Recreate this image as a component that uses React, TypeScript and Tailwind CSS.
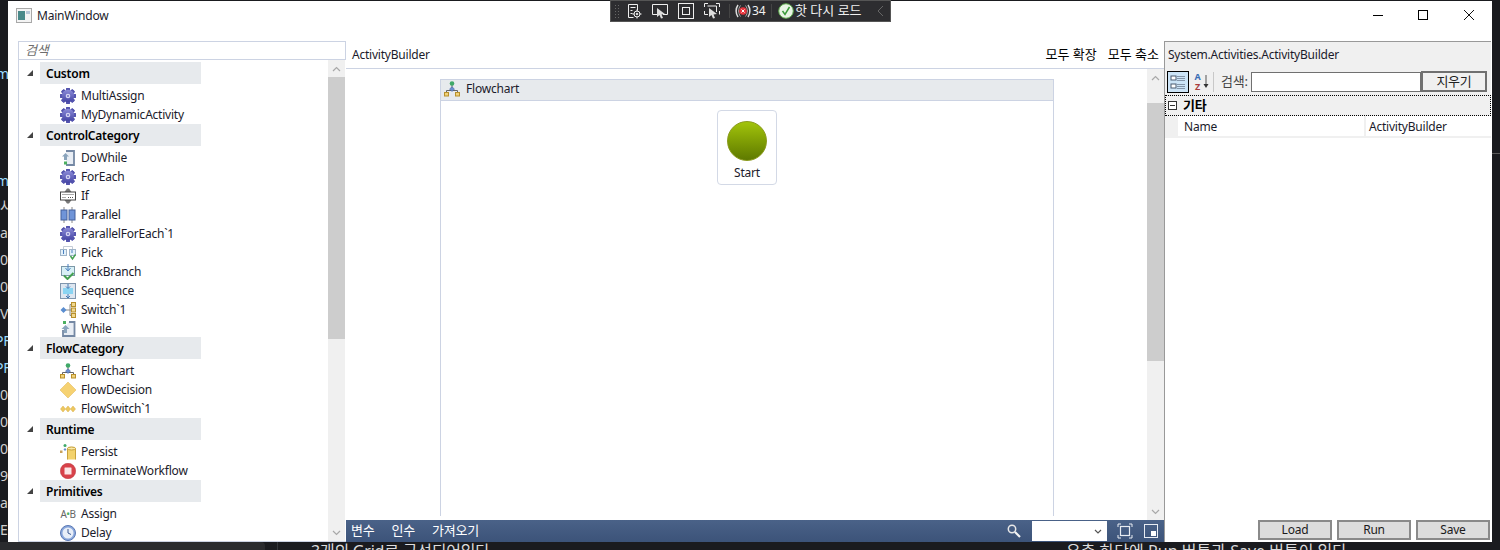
import type { ReactNode } from "react";

// WPF workflow designer host window, with the VS debug toolbar on top of it.
const font = "font-['Noto_Sans','Noto_Sans_CJK_KR',sans-serif] tracking-[-0.22px]";

function Gear() {
  const teeth = [0, 45, 90, 135, 180, 225, 270, 315];
  return (
    <svg width="16" height="16" viewBox="0 0 16 16">
      <defs>
        <linearGradient id="gearFill" x1="0" y1="0" x2="0" y2="1">
          <stop offset="0" stopColor="#8c8cd8" />
          <stop offset="1" stopColor="#4444a4" />
        </linearGradient>
      </defs>
      {teeth.map((a) => (
        <rect key={a} x="6" y="0" width="4" height="16" rx="1" fill="#5454ae" transform={`rotate(${a} 8 8)`} />
      ))}
      <circle cx="8" cy="8" r="6.200" fill="url(#gearFill)" />
      <circle cx="8" cy="8" r="2.300" fill="#d4d4f2" />
      <circle cx="8" cy="8" r="1" fill="#6e6ec0" />
    </svg>
  );
}

function DoWhileIcon() {
  return (
    <svg width="16" height="16" viewBox="0 0 16 16">
      <path d="M6 1h8v14H6" fill="#e8edf4" stroke="#7488a4" strokeWidth="1.800" />
      <path d="M5.500 3l3.500 3.500H7V10H4V6.500H2z" fill="#8aa4bc" />
      <rect x="4" y="11.500" width="3" height="3" fill="#4cb060" />
    </svg>
  );
}

function WhileIcon() {
  return (
    <svg width="16" height="16" viewBox="0 0 16 16">
      <path d="M9 1h5.500v14H3V9" fill="#e8edf4" stroke="#7488a4" strokeWidth="1.800" />
      <path d="M5.500 4L9.500 8H7v4H4V8H1.500z" fill="#8aa4bc" />
      <rect x="3" y="0" width="3" height="3" fill="#4cb060" />
    </svg>
  );
}

function IfIcon() {
  return (
    <svg width="16" height="16" viewBox="0 0 16 16">
      <path d="M4.500 4L7 0.500h2L11.500 4zM4.500 12L7 15.500h2l2.500-3.500z" fill="#777" />
      <rect x="0.500" y="4" width="15" height="8" fill="#fff" stroke="#444" />
      <path d="M2.500 6.500h3M6.500 6.500h3M10.500 6.500h3M2.500 9.500h4M8 9.500h5.500" stroke="#555" strokeDasharray="1 1" />
    </svg>
  );
}

function ParallelIcon() {
  return (
    <svg width="16" height="16" viewBox="0 0 16 16">
      <path d="M4 0v16M12 0v16" stroke="#888" />
      <rect x="1" y="3" width="6" height="10" fill="#6f94d8" stroke="#44609c" />
      <rect x="9" y="3" width="6" height="10" fill="#6f94d8" stroke="#44609c" />
    </svg>
  );
}

function PickIcon() {
  return (
    <svg width="16" height="16" viewBox="0 0 16 16">
      <path d="M3.500 4V1.500h9V4" fill="none" stroke="#c4ccd6" />
      <rect x="0.500" y="4.500" width="6" height="6" fill="#e2f0fa" stroke="#9fb4c8" />
      <rect x="9.500" y="4.500" width="6" height="6" fill="#e2f0fa" stroke="#9fb4c8" />
      <path d="M3.500 5v4M12 5v3" stroke="#4a80c0" />
      <path d="M10.500 11l2 3 3-4.500" fill="none" stroke="#44a050" strokeWidth="1.500" />
    </svg>
  );
}

function PickBranchIcon() {
  return (
    <svg width="16" height="16" viewBox="0 0 16 16">
      <rect x="1.500" y="2.500" width="13" height="9" fill="#d8f0f6" stroke="#7c98a8" />
      <path d="M8 0v6M5.500 4L8 7l2.500-3" fill="none" stroke="#4a80c0" />
      <path d="M4 11.500l3.500 3.500 6-6" fill="none" stroke="#44a050" strokeWidth="2" />
    </svg>
  );
}

function SequenceIcon() {
  return (
    <svg width="16" height="16" viewBox="0 0 16 16">
      <rect x="0.500" y="0.500" width="15" height="15" fill="#dde6f0" stroke="#8096ae" />
      <rect x="3" y="5" width="10" height="6" fill="#8ad4f2" />
      <path d="M8 1v4M6 3.500L8 5.500l2-2M8 11v4M6 13l2 2 2-2" fill="none" stroke="#3f78b4" />
    </svg>
  );
}

function SwitchIcon() {
  return (
    <svg width="16" height="16" viewBox="0 0 16 16">
      <path d="M5 8h5M10 2.500v11M10 2.500h2M10 8h2M10 13.500h2" stroke="#8a8a8a" fill="none" />
      <path d="M3.500 5L6.500 8l-3 3L0.500 8z" fill="#5b8ed0" />
      <rect x="11.500" y="0.500" width="4" height="4" fill="#f0d890" stroke="#b8902c" />
      <rect x="11.500" y="6" width="4" height="4" fill="#f0d890" stroke="#b8902c" />
      <rect x="11.500" y="11.500" width="4" height="4" fill="#f0d890" stroke="#b8902c" />
    </svg>
  );
}

function FlowchartIcon() {
  return (
    <svg width="16" height="16" viewBox="0 0 16 16">
      <path d="M8 3v5M2.500 12V9.500h11V12" stroke="#666" fill="none" />
      <circle cx="8" cy="2.500" r="2.300" fill="#3fa968" />
      <path d="M8 5.800L10.500 8 8 10.500 5.500 8z" fill="#6a8fd0" stroke="#3e5d9c" strokeWidth="0.500" />
      <rect x="0.500" y="11.500" width="4" height="3.500" fill="#f0d27a" stroke="#b8902c" />
      <rect x="11.500" y="11.500" width="4" height="3.500" fill="#f0d27a" stroke="#b8902c" />
    </svg>
  );
}

function DecisionIcon() {
  return (
    <svg width="16" height="16" viewBox="0 0 16 16">
      <path d="M8 0l8 8-8 8-8-8z" fill="#f6d272" stroke="#e0b450" strokeWidth="0.500" />
    </svg>
  );
}

function FlowSwitchIcon() {
  return (
    <svg width="16" height="16" viewBox="0 0 16 16">
      <path d="M3 5l2.500 3L3 11 0.500 8zM8 5l2.500 3L8 11 5.500 8zM13 5l2.500 3L13 11l-2.500-3z" fill="#edc860" stroke="#d8ae48" strokeWidth="0.500" />
    </svg>
  );
}

function PersistIcon() {
  return (
    <svg width="16" height="16" viewBox="0 0 16 16">
      <path d="M7.500 15.500V4.500c0-1.500 8-1.500 8 0v11" fill="#f3d26c" stroke="#c8a23c" />
      <ellipse cx="11.500" cy="4.500" rx="4" ry="1.500" fill="#fae9a8" stroke="#c8a23c" />
      <circle cx="5" cy="1.500" r="1.500" fill="#3fa968" />
      <path d="M5 4L6.500 5.500 5 7 3.500 5.500z" fill="#6a8fd0" />
      <rect x="0" y="6.500" width="2.500" height="2.500" fill="#c8a25c" />
    </svg>
  );
}

function TerminateIcon() {
  return (
    <svg width="16" height="16" viewBox="0 0 16 16">
      <circle cx="8" cy="8" r="7.700" fill="#d8424a" stroke="#b83238" strokeWidth="0.500" />
      <rect x="4.500" y="4.500" width="7" height="7" rx="0.500" fill="#fbe6e6" />
    </svg>
  );
}

function DelayIcon() {
  return (
    <svg width="16" height="16" viewBox="0 0 16 16">
      <circle cx="8" cy="8" r="7.500" fill="#8aa8dc" stroke="#5a78b4" />
      <circle cx="8" cy="8" r="5.500" fill="#e8eef8" />
      <path d="M8 4v4l3 1.500" fill="none" stroke="#3c5a94" />
    </svg>
  );
}

function AssignIcon() {
  return (
    <span className="flex w-4 items-center justify-center text-[10px] leading-none tracking-[-0.5px] text-[#666]">
      A<span className="text-[#4cb060]">•</span>B
    </span>
  );
}

function Header({ title, className = "" }: { title: string; className?: string }) {
  return (
    <div className={`flex h-[22px] items-center ${className}`}>
      <svg width="8" height="8" viewBox="0 0 8 8" className="ml-[7px] mr-[6px] shrink-0">
        <path d="M7 1v6H1z" fill="#444" />
      </svg>
      <div className="flex h-full w-[161px] items-center bg-[#e7eaed] pl-[6px] pt-px text-[12px] font-semibold text-black">
        {title}
      </div>
    </div>
  );
}

function Item({ icon, label, className = "" }: { icon: ReactNode; label: string; className?: string }) {
  return (
    <div className={`flex h-[19px] items-center pl-[41px] text-[12px] text-[#1b1b2b] ${className}`}>
      <span className="mr-[5px] flex h-4 w-4 shrink-0 items-center justify-center">{icon}</span>
      {label}
    </div>
  );
}

function ScrollBar({ thumbTop, thumbHeight }: { thumbTop: string; thumbHeight: string }) {
  return (
    <div className="flex h-full w-[17px] shrink-0 flex-col bg-[#f0f0f0]">
      <div className="flex h-[17px] shrink-0 items-center justify-center">
        <svg width="9" height="6" viewBox="0 0 9 6"><path d="M1 5l3.500-3.500L8 5" fill="none" stroke="#a8a8a8" strokeWidth="1.200" /></svg>
      </div>
      <div className={`${thumbTop} ${thumbHeight} shrink-0 bg-[#cdcdcd]`} />
      <div className="flex-1" />
      <div className="flex h-[17px] shrink-0 items-center justify-center">
        <svg width="9" height="6" viewBox="0 0 9 6"><path d="M1 1l3.500 3.500L8 1" fill="none" stroke="#a8a8a8" strokeWidth="1.200" /></svg>
      </div>
    </div>
  );
}

function Toolbox() {
  return (
    <div className="flex w-[328px] shrink-0 flex-col border-l border-[#ccd3e3]">
      <div className="flex h-[19px] shrink-0 items-center border-y border-r border-[#ccd3e3] pl-[6px] text-[13px] italic text-[#6d6d6d]">
        검색
      </div>
      <div className="flex min-h-0 flex-1 border-b border-[#ccd3e3] pr-px">
        <div className="min-w-0 flex-1 overflow-hidden pt-[2px]">
          <Header title="Custom" />
          <div className="pt-[2px]">
            <Item icon={<Gear />} label="MultiAssign" />
            <Item icon={<Gear />} label="MyDynamicActivity" />
          </div>
          <Header title="ControlCategory" />
          <div className="pt-[2px]">
            <Item icon={<DoWhileIcon />} label="DoWhile" />
            <Item icon={<Gear />} label="ForEach" />
            <Item icon={<IfIcon />} label="If" />
            <Item icon={<ParallelIcon />} label="Parallel" />
            <Item icon={<Gear />} label="ParallelForEach`1" />
            <Item icon={<PickIcon />} label="Pick" />
            <Item icon={<PickBranchIcon />} label="PickBranch" />
            <Item icon={<SequenceIcon />} label="Sequence" />
            <Item icon={<SwitchIcon />} label="Switch`1" />
            <Item icon={<WhileIcon />} label="While" />
          </div>
          <Header title="FlowCategory" className="-mt-px" />
          <div className="pt-[2px]">
            <Item icon={<FlowchartIcon />} label="Flowchart" />
            <Item icon={<DecisionIcon />} label="FlowDecision" />
            <Item icon={<FlowSwitchIcon />} label="FlowSwitch`1" />
          </div>
          <Header title="Runtime" />
          <div className="pt-[2px]">
            <Item icon={<PersistIcon />} label="Persist" />
            <Item icon={<TerminateIcon />} label="TerminateWorkflow" />
          </div>
          <Header title="Primitives" />
          <div className="pt-[2px]">
            <Item icon={<AssignIcon />} label="Assign" />
            <Item icon={<DelayIcon />} label="Delay" />
          </div>
        </div>
        <ScrollBar thumbTop="mt-0" thumbHeight="h-[262px]" />
      </div>
    </div>
  );
}

function Designer() {
  return (
    <div className="flex w-[818px] shrink-0 flex-col">
      <div className="flex h-[28px] shrink-0 items-center justify-between border-b border-[#ccd3e3] pl-[6px] pr-[5px] text-[12px] text-[#1b1b2b]">
        <span>ActivityBuilder</span>
        <div className="flex gap-[11px] text-[13px] tracking-normal text-black">
          <span>모두 확장</span>
          <span>모두 축소</span>
        </div>
      </div>
      <div className="flex min-h-0 flex-1">
        <div className="min-w-0 flex-1 pl-[94px] pr-[93px] pt-[10px]">
          <div className="flex h-[437px] flex-col border-x border-t border-[#ccd3e3]">
            <div className="flex h-[21px] shrink-0 items-center gap-[6px] border-b border-[#ccd3e3] bg-[#e7eaed] pb-[2px] pl-[3px] text-[12px] text-[#1b1b2b]">
              <FlowchartIcon />
              Flowchart
            </div>
            <div className="flex justify-center pt-[9px]">
              <div className="flex h-[75px] w-[60px] flex-col items-center rounded-[4px] border border-[#d3d9e6] pt-[10px]">
                <div className="h-10 w-10 rounded-full border border-[#8a9a1c] bg-gradient-to-b from-[#a2c40c] to-[#5f7a00]" />
                <span className="mt-[3px] text-[12px] leading-[18px] text-[#1b1b2b]">Start</span>
              </div>
            </div>
          </div>
        </div>
        <ScrollBar thumbTop="mt-[17px]" thumbHeight="h-[258px]" />
      </div>
      <div className="flex h-[22px] shrink-0 items-center bg-gradient-to-b from-[#4a6288] to-[#3c5379] pl-[5px] text-[13px] text-white">
        <div className="flex gap-[17px]">
          <span>변수</span>
          <span>인수</span>
          <span>가져오기</span>
        </div>
        <div className="ml-auto flex items-center">
          <svg width="16" height="16" viewBox="0 0 16 16">
            <circle cx="6" cy="6" r="3.700" fill="none" stroke="#e8e8e8" strokeWidth="1.500" />
            <path d="M9 9l5 5" stroke="#f4f4f4" strokeWidth="2.200" />
          </svg>
          <div className="ml-[10px] flex h-5 w-[75px] items-center justify-end bg-white pr-[5px]">
            <svg width="8" height="5" viewBox="0 0 8 5"><path d="M1 1l3 3 3-3" fill="none" stroke="#555" strokeWidth="1.200" /></svg>
          </div>
          <svg width="16" height="16" viewBox="0 0 16 16" className="ml-[10px]">
            <rect x="3.500" y="3.500" width="9" height="9" fill="none" stroke="#e8ecf2" strokeWidth="1.200" />
            <path d="M1 4V1h3M12 1h3v3M15 12v3h-3M4 15H1v-3" fill="none" stroke="#e8ecf2" />
          </svg>
          <svg width="16" height="16" viewBox="0 0 16 16" className="ml-[10px] mr-[5px]">
            <rect x="1.500" y="1.500" width="13" height="13" fill="none" stroke="#e8ecf2" />
            <rect x="8" y="8" width="5" height="5" fill="#fff" />
          </svg>
        </div>
      </div>
    </div>
  );
}

function Properties() {
  return (
    <div className="flex w-[327px] shrink-0 flex-col border-l border-t border-[#999]">
      <div className="flex h-[26px] shrink-0 items-center bg-[#f0f0f0] pl-[3px] text-[12px] text-[#1b1b2b]">
        System.Activities.ActivityBuilder
      </div>
      <div className="flex h-[27px] shrink-0 items-center bg-[#f0f0f0] pl-[2px] text-[12px]">
        <div className="flex h-[22px] w-[22px] items-center justify-center border border-black bg-[#cce4f7]">
          <svg width="16" height="16" viewBox="0 0 16 16">
            <rect x="1" y="2" width="5" height="4" fill="#fff" stroke="#4a5a70" />
            <rect x="1" y="10" width="5" height="4" fill="#fff" stroke="#4a5a70" />
            <path d="M7 2.500h8M7 4.500h8M7 6.500h8M7 10.500h8M7 12.500h8M7 14.500h8" stroke="#8494a8" />
          </svg>
        </div>
        <span className="ml-[3px] flex h-5 w-[11px] flex-col items-center justify-center text-[9px] font-bold leading-[10px]">
          <span className="text-[#3b6db5]">A</span>
          <span className="text-[#a83c3c]">Z</span>
        </span>
        <svg width="6" height="16" viewBox="0 0 6 16">
          <path d="M3 1v10" stroke="#555" />
          <path d="M0.500 10h5L3 14z" fill="#333" />
        </svg>
        <div className="ml-[4px] h-[20px] w-px bg-[#c8c8c8]" />
        <span className="ml-[7px] w-[26px] shrink-0 whitespace-nowrap text-[13px] text-[#444]">검색:</span>
        <div className="ml-[4px] h-[20px] w-[170px] shrink-0 border border-[#707070] bg-white" />
        <div className="flex h-[21px] w-[66px] shrink-0 items-center justify-center border-2 border-[#707070] bg-[#f0f0f0] text-[13px] text-[#222]">
          지우기
        </div>
      </div>
      <div className="flex h-[21px] shrink-0 items-center border border-dotted border-black bg-[#f0f0f0] pl-[2px] text-[13px] font-semibold text-black">
        <span className="flex h-[9px] w-[9px] items-center justify-center border border-[#333] bg-white">
          <span className="h-px w-[5px] bg-[#333]" />
        </span>
        <span className="ml-[6px]">기타</span>
      </div>
      <div className="flex h-[22px] shrink-0 border-b-2 border-[#f0f0f0] text-[12px] text-[#1b1b2b]">
        <div className="w-[13px] shrink-0 bg-[#f0f0f0]" />
        <div className="flex w-[188px] shrink-0 items-center border-r-2 border-[#f0f0f0] pl-[6px] pt-px">Name</div>
        <div className="flex items-center pl-[3px] pt-px">ActivityBuilder</div>
      </div>
      <div className="flex flex-1 items-end justify-end gap-[5px] pb-[2px] pr-[1px]">
        <WinButton label="Load" />
        <WinButton label="Run" />
        <WinButton label="Save" />
      </div>
    </div>
  );
}

function WinButton({ label }: { label: string }) {
  return (
    <div className="flex h-5 w-[74px] items-center justify-center border-2 border-[#8a8a8a] bg-[#dddddd] text-[12px] text-[#1b1b1b]">
      {label}
    </div>
  );
}

function DebugBar() {
  return (
    <div className="absolute left-[610px] top-0 flex h-[22px] w-[281px] items-center border border-[#555] bg-[#2d2d30] pl-[3px] text-[13px] text-[#f0f0f0]">
      <div className="h-[14px] w-[5px] bg-[radial-gradient(#666_1px,transparent_1px)] bg-[length:3px_3px]" />
      <svg width="16" height="16" viewBox="0 0 16 16" className="ml-[7px]" fill="none" stroke="#eee">
        <path d="M2.500 1.500h9v6M2.500 1.500v13h5M4.500 4.500h5M4.500 7.500h2M4.500 10.500h2" />
        <circle cx="11" cy="11" r="3" />
        <circle cx="11" cy="11" r="0.800" fill="#eee" />
        <path d="M11 6.500v2M11 13.500v2M6.500 11h2M13.500 11h2" />
      </svg>
      <svg width="16" height="16" viewBox="0 0 16 16" className="ml-[10px]" fill="none">
        <path d="M5 11.500H0.500v-10h15v10H11" stroke="#eee" />
        <path d="M5 5l8 6-3.500 0.500L11 15l-2 0.500-1.500-3.500L5 14z" fill="#ddd" />
      </svg>
      <svg width="16" height="16" viewBox="0 0 16 16" className="ml-[10px]" fill="none" stroke="#eee">
        <rect x="0.500" y="0.500" width="15" height="15" />
        <rect x="4.500" y="4.500" width="7" height="7" />
      </svg>
      <svg width="16" height="16" viewBox="0 0 16 16" className="ml-[10px]" fill="none">
        <path d="M0.500 4V0.500H4M12 0.500h3.500V4M0.500 8v3.500H4M15.500 8v3.500" stroke="#eee" />
        <path d="M3.500 3h9v6" stroke="#eee" />
        <path d="M5 5l8 6-3.500 0.500L11 15l-2 0.500-1.500-3.500L5 14z" fill="#ddd" />
      </svg>
      <div className="ml-[9px] h-[14px] w-px bg-[#444]" />
      <svg width="16" height="16" viewBox="0 0 16 16" className="ml-[5px]" fill="none">
        <path d="M3 2C0.500 5.500 0.500 10.500 3 14M13 2c2.500 3.500 2.500 8.500 0 12" stroke="#ddd" strokeWidth="1.500" />
        <path d="M5.500 2.500C3 6 3 10 5.500 13.500M10.500 2.500C13 6 13 10 10.500 13.500" stroke="#aaa" />
        <circle cx="8" cy="8" r="3.800" fill="#e5353d" />
        <path d="M6.500 6.500l3 3M9.500 6.500l-3 3" stroke="#fff" />
      </svg>
      <span className="ml-[1px] w-[14px] shrink-0 text-[12px]">34</span>
      <div className="ml-[5px] h-[14px] w-px bg-[#444]" />
      <svg width="16" height="16" viewBox="0 0 16 16" className="ml-[6px]" fill="none">
        <circle cx="8" cy="8" r="7.300" fill="#e8f4e4" stroke="#5aa84a" />
        <path d="M4.500 8l2.500 3.500L11.500 4" stroke="#3a9a3a" strokeWidth="1.500" />
      </svg>
      <span className="ml-[1px] w-[68px] shrink-0 whitespace-nowrap tracking-normal">핫 다시 로드</span>
      <svg width="7" height="12" viewBox="0 0 7 12" className="ml-[14px]" fill="none">
        <path d="M6 1L1 6l5 5" stroke="#666" />
      </svg>
    </div>
  );
}

const leftScraps = ["사", "a", "0", "0", "V", "PF", "PF", "0", "0", "0", "9", "a", "E"];

export default function App() {
  return (
    <div className={`relative flex h-[550px] w-[1500px] flex-col overflow-hidden bg-[#1a1b1f] ${font}`}>
      <div className="h-px shrink-0" />
      <div className="flex h-[541px] shrink-0">
        <div className="w-2 shrink-0 overflow-hidden pt-[64px] text-[14px] leading-[18px] text-[#cfcfcf]">
          <div className="-ml-[4px] text-[#9cdcfe]">m</div>
          <div className="-ml-[4px] mt-[89px] text-[#9cdcfe]">m</div>
          <div className="flex flex-col gap-[9px] pt-[7px]">
            {leftScraps.map((s, i) => (
              <div key={i} className={s === "PF" ? "-ml-[5px] whitespace-nowrap text-[#9cdcfe]" : "whitespace-nowrap"}>{s}</div>
            ))}
          </div>
        </div>
        <div className="flex w-[1484px] shrink-0 flex-col bg-white">
          <div className="relative flex h-[40px] shrink-0 items-start pl-[8px] pt-[7px]">
            <svg width="16" height="15" viewBox="0 0 16 15">
              <rect x="0.500" y="0.500" width="15" height="14" fill="#f4f4f4" stroke="#a8a8a8" />
              <rect x="2" y="3" width="7" height="9" fill="#4a8a8a" />
              <rect x="10" y="3" width="4" height="3" fill="#b8c8d8" />
            </svg>
            <span className="ml-[5px] text-[12px] leading-4 text-[#1b1b2b]">MainWindow</span>
            <div className="ml-auto flex items-center pt-[2px]">
              <span className="h-px w-[10px] bg-black" />
              <span className="ml-[35px] h-[10px] w-[10px] border border-black" />
              <svg width="10" height="10" viewBox="0 0 10 10" className="ml-[36px] mr-[18px]">
                <path d="M0 0l10 10M10 0L0 10" stroke="#111" />
              </svg>
            </div>
          </div>
          <div className="flex min-h-0 flex-1 pl-[10px]">
            <Toolbox />
            <Designer />
            <Properties />
          </div>
        </div>
        <div className="w-2 shrink-0 pt-[152px]">
          <div className="h-px bg-[#5a5a5a]" />
        </div>
      </div>
      <div className="flex h-2 shrink-0 overflow-hidden text-[16px] leading-[18px] text-[#dcdcdc]">
        <div className="w-[265px] shrink-0 rounded-tr-[4px] bg-[#2a2b2e]" />
        <div className="w-[12px] shrink-0" />
        <div className="w-px shrink-0 bg-[#33353a]" />
        <div className="w-[33px] shrink-0" />
        <span className="w-[755px] shrink-0 whitespace-nowrap">3개의 Grid로 구성되어있다</span>
        <span className="whitespace-nowrap tracking-normal">우측 하단에 Run 버튼과 Save 버튼이 있다.</span>
      </div>
      <DebugBar />
    </div>
  );
}
